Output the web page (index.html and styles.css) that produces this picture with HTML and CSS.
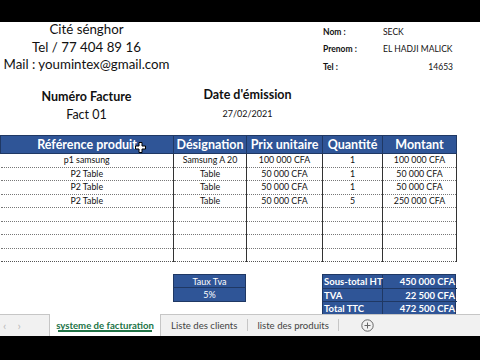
FILE: index.html
```html
<!DOCTYPE html>
<html>
<head>
<meta charset="utf-8">
<link rel="stylesheet" href="styles.css">
</head>
<body>
<div class="screen">
  <div class="blackbar top"></div>
  <div class="sheet">
    <div class="head">
      <div class="addr">
        <div>Cité sénghor</div>
        <div>Tel / 77 404 89 16</div>
        <div>Mail : youmintex@gmail.com</div>
      </div>
      <div class="client">
        <div class="lbl">Nom :</div><div class="val">SECK</div>
        <div class="lbl">Prenom :</div><div class="val">EL HADJI MALICK</div>
        <div class="lbl">Tel :</div><div class="val num">14653</div>
      </div>
    </div>
    <div class="meta">
      <div class="facture">
        <div class="mtitle">Numéro Facture</div>
        <div class="mval">Fact 01</div>
      </div>
      <div class="date">
        <div class="mtitle">Date d'émission</div>
        <div class="mval small">27/02/2021</div>
      </div>
    </div>
    <div class="tablewrap">
      <table class="items">
        <colgroup><col class="c1"><col class="c2"><col class="c3"><col class="c4"><col class="c5"></colgroup>
        <thead>
          <tr><th>Référence produit</th><th>Désignation</th><th>Prix unitaire</th><th>Quantité</th><th>Montant</th></tr>
        </thead>
        <tbody>
          <tr><td>p1 samsung</td><td>Samsung A 20</td><td>100 000 CFA</td><td>1</td><td>100 000 CFA</td></tr>
          <tr><td>P2 Table</td><td>Table</td><td>50 000 CFA</td><td>1</td><td>50 000 CFA</td></tr>
          <tr><td>P2 Table</td><td>Table</td><td>50 000 CFA</td><td>1</td><td>50 000 CFA</td></tr>
          <tr><td>P2 Table</td><td>Table</td><td>50 000 CFA</td><td>5</td><td>250 000 CFA</td></tr>
          <tr><td></td><td></td><td></td><td></td><td></td></tr>
          <tr><td></td><td></td><td></td><td></td><td></td></tr>
          <tr><td></td><td></td><td></td><td></td><td></td></tr>
          <tr><td></td><td></td><td></td><td></td><td></td></tr>
        </tbody>
      </table>
      <div class="cursor"><svg width="11" height="11" viewBox="0 0 11 11"><path d="M4 0.5h3v3.5h3.5v3h-3.5v3.5h-3v-3.5h-3.5v-3h3.5z" fill="#fff" stroke="#000" stroke-width="1"/></svg></div>
    </div>
    <div class="bottomrow">
      <div class="tva">
        <div class="bcell">Taux Tva</div>
        <div class="bcell">5%</div>
      </div>
      <div class="totals">
        <div class="tl">Sous-total HT</div><div class="tv">450 000 CFA</div>
        <div class="tl">TVA</div><div class="tv">22 500 CFA</div>
        <div class="tl">Total TTC</div><div class="tv">472 500 CFA</div>
      </div>
    </div>
  </div>
  <div class="tabs">
    <div class="arrows"><span>‹</span><span>›</span></div>
    <div class="tab active">systeme de facturation</div>
    <div class="tab">Liste des clients</div>
    <div class="tab last">liste des produits</div>
    <div class="add"><svg width="13" height="13" viewBox="0 0 13 13"><circle cx="6.5" cy="6.5" r="5.7" fill="none" stroke="#666" stroke-width="1"/><path d="M6.5 3.5v6M3.5 6.5h6" stroke="#666" stroke-width="1"/></svg></div>
  </div>
  <div class="blackbar bottom"></div>
</div>
</body>
</html>
```
FILE: styles.css
```css
* { box-sizing: border-box; }
html, body { margin: 0; padding: 0; background: #000; }
body { font-family: Lato, "Liberation Sans", sans-serif; color: #111; }
.screen { width: 480px; height: 360px; display: flex; flex-direction: column; overflow: hidden; }
.blackbar { background: #000; flex: none; }
.blackbar.top { height: 22px; }
.blackbar.bottom { height: 24px; }
.sheet { background: #fff; height: 292px; flex: none; position: relative; overflow: hidden; }

.head { display: flex; height: 59px; }
.addr { width: 173px; display: flex; flex-direction: column; align-items: center; font-size: 13.3px; line-height: 17.5px; margin-top: -1px; white-space: nowrap; }
.client { margin-left: 149px; display: grid; grid-template-columns: 60px 74px; grid-auto-rows: 17.5px; align-items: center; font-size: 8.5px; padding-top: 1px; }
.client .lbl { font-weight: bold; padding-left: 1px; }
.client .val { padding-left: 1px; }
.client .num { text-align: right; padding-right: 3px; }

.meta { display: flex; height: 54px; padding-top: 7px; }
.facture { width: 173px; text-align: center; }
.date { width: 149px; text-align: center; }
.mtitle { font-weight: bold; font-size: 12.5px; line-height: 17px; }
.mval { font-size: 12.5px; line-height: 19px; }
.mval.small { font-size: 9px; line-height: 22px; }
.date .mtitle { margin-top: -2px; }

.tablewrap { position: relative; width: 456px; }
.items { border-collapse: collapse; table-layout: fixed; width: 456px; }
.c1 { width: 173px; } .c2 { width: 73px; } .c3 { width: 76px; } .c4 { width: 60px; } .c5 { width: 74px; }
.items th { background: #2f5597; color: #fff; font-weight: bold; font-size: 12.5px; height: 18px; padding: 0; border: 1px solid #1f3864; line-height: 16px; white-space: nowrap; }
.items td { height: 13.5px; padding: 0; font-size: 8.8px; text-align: center; border-left: 1px solid #333; border-right: 1px solid #333; border-bottom: 1px dotted #777; line-height: 12px; white-space: nowrap; }
.items td:first-child { border-left: none; }
.items tbody tr:last-child td { border-bottom: 1px dotted #555; }
.cursor { position: absolute; left: 135px; top: 7px; line-height: 0; }

.bottomrow { display: flex; margin-top: 12px; }
.tva { margin-left: 173px; width: 73px; height: 28px; background: #2f5597; border: 1px solid #1f3864; }
.bcell { color: #fff; font-size: 9px; text-align: center; height: 13px; line-height: 13px; }
.bcell:first-child { border-bottom: 1px solid #1f3864; }
.totals { margin-left: 76px; width: 134px; display: grid; grid-template-columns: 60px 74px; grid-auto-rows: 13.5px; background: #2f5597; border: 1px solid #1f3864; }
.tl, .tv { color: #fff; font-weight: bold; font-size: 9.5px; line-height: 13px; border-bottom: 1px solid #1f3864; white-space: nowrap; }
.tl { padding-left: 1px; border-right: 1px solid #1f3864; }
.tv { text-align: right; padding-right: 2px; }

.tabs { height: 22px; flex: none; background: #f1f1f1; border-top: 1px solid #c6c6c6; display: flex; align-items: stretch; font-size: 9.6px; color: #444; white-space: nowrap; }
.arrows { width: 49px; display: flex; gap: 11px; padding-left: 3px; align-items: center; color: #bbb; font-size: 12px; }
.tab { display: flex; align-items: center; padding: 0 10px; position: relative; }
.tab + .tab::before { content: ""; position: absolute; left: 0; top: 4px; bottom: 5px; border-left: 1px solid #c6c6c6; }
.tab.last::after { content: ""; position: absolute; right: 0; top: 4px; bottom: 5px; border-left: 1px solid #c6c6c6; }
.tab.active { background: #fff; color: #217346; font-weight: bold; width: 112px; padding: 0; justify-content: center; margin-top: -1px; border-left: 1px solid #c6c6c6; border-right: 1px solid #c6c6c6; }
.tab.active::after { content: ""; position: absolute; left: 8px; right: 8px; bottom: 4px; border-bottom: 2px solid #217346; }
.tab.active + .tab::before { display: none; }
.add { display: flex; align-items: center; margin-left: 22px; line-height: 0; }
```
